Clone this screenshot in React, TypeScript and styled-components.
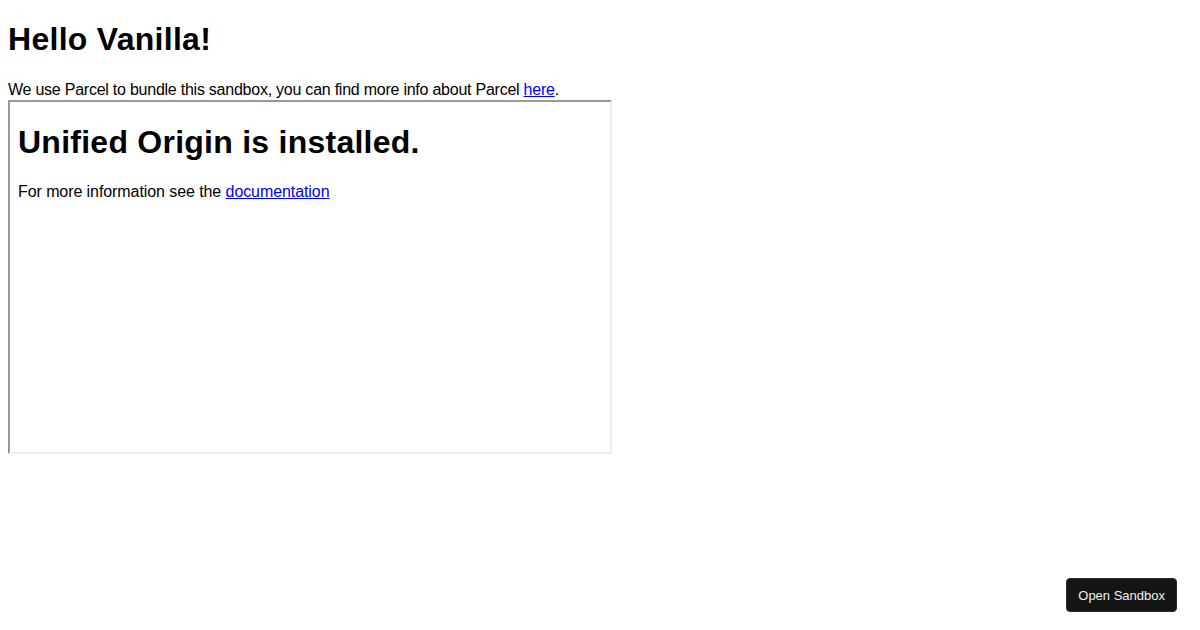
import styled, { createGlobalStyle } from "styled-components"

const GlobalStyle = createGlobalStyle`
  body {
    margin: 0;
    background: #ffffff;
    color: #000000;
    font-family: "Liberation Sans", Arial, sans-serif;
  }
`

const App = () => {
  return (
    <>
      <GlobalStyle />
      <Page>
        <Title>Hello Vanilla!</Title>
        <Intro>
          We use Parcel to bundle this sandbox, you can find more info about Parcel{" "}
          <Link href="#">here</Link>.
        </Intro>
        <Frame>
          <FrameTitle>Unified Origin is installed.</FrameTitle>
          <FrameText>
            For more information see the <Link href="#">documentation</Link>
          </FrameText>
        </Frame>
      </Page>
      <OpenButton>Open Sandbox</OpenButton>
    </>
  )
}

export default App

const Page = styled.div`
  padding: 0 8px 8px;
  display: flow-root;
`

const Title = styled.h1`
  font-size: 32px;
  font-weight: bold;
  letter-spacing: 0.28px;
  margin: 21.44px 0;
`

const Intro = styled.div`
  font-size: 16px;
  line-height: 20px;
  letter-spacing: -0.24px;
`

const Link = styled.a`
  color: #0000ee;
  text-decoration: underline;
`

const Frame = styled.div`
  box-sizing: content-box;
  width: 584px;
  height: 350px;
  padding: 0 8px;
  border-style: solid;
  border-width: 2px;
  border-color: #999999 #eeeeee #eeeeee #999999;
  overflow: hidden;
  display: flow-root;
`

const FrameTitle = styled.h1`
  font-size: 32px;
  font-weight: bold;
  letter-spacing: 0.25px;
  margin: 22.4px 0 21.44px;
`

const FrameText = styled.p`
  font-size: 16px;
  letter-spacing: -0.08px;
  margin: 17px 0 16px;
`

const OpenButton = styled.button`
  position: fixed;
  right: 23px;
  bottom: 18px;
  height: 34px;
  padding: 0 11px;
  background: #151515;
  color: #f0f0f0;
  border: 1px solid #2a2a2a;
  border-radius: 4px;
  font-family: "Liberation Sans", Arial, sans-serif;
  font-size: 13px;
  cursor: pointer;
`
